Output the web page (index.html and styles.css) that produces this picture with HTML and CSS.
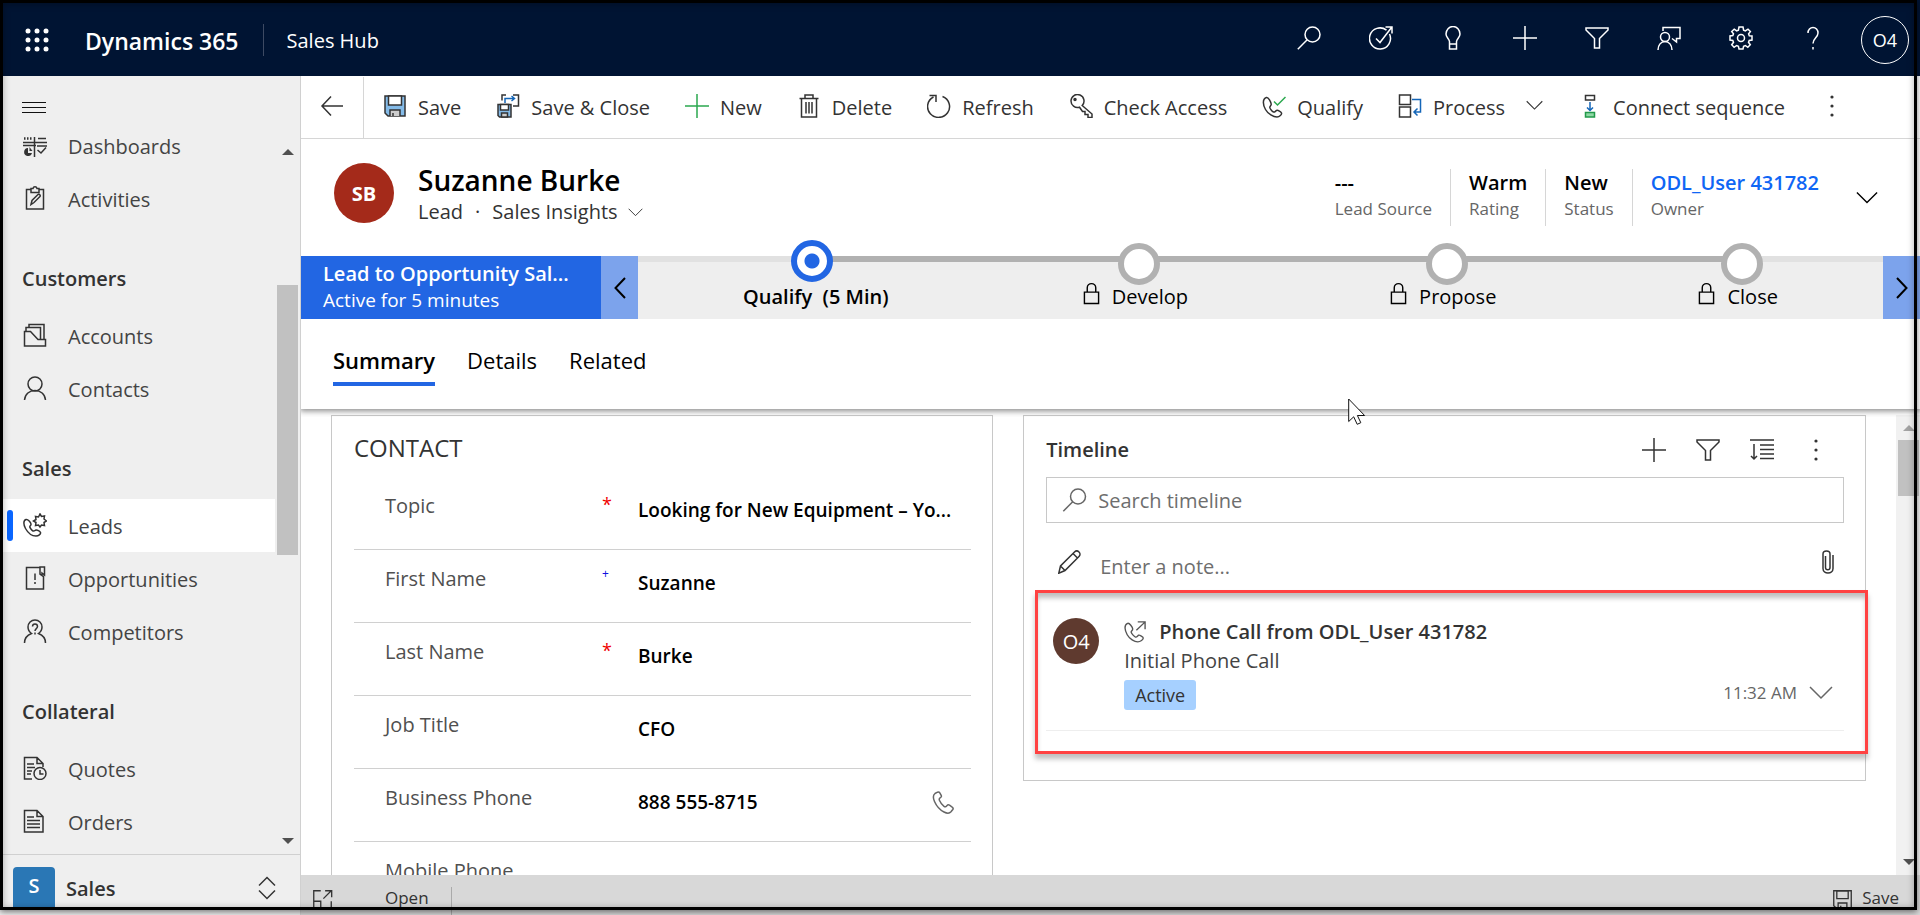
FILE: index.html
```html
<!DOCTYPE html>
<html lang="en">
<head>
<meta charset="utf-8">
<title>Lead: Suzanne Burke - Dynamics 365</title>
<link rel="stylesheet" href="styles.css">
</head>
<body>
<svg class="sprite" aria-hidden="true">
  <symbol id="search" viewBox="0 0 24 24"><circle cx="15.500" cy="8.500" r="7.500"/><path d="M10.200 13.800 .8 23.200"/></symbol>
  <symbol id="plus" viewBox="0 0 24 24"><path d="M12 0v24M0 12h24"/></symbol>
  <symbol id="filter" viewBox="0 0 24 24"><path d="M1 2h22v2l-8.500 8.500V22h-5v-9.500L1 4z"/></symbol>
  <symbol id="more" viewBox="0 0 24 24"><g fill="currentColor" stroke="none"><circle cx="12" cy="3" r="1.600"/><circle cx="12" cy="12" r="1.600"/><circle cx="12" cy="21" r="1.600"/></g></symbol>
  <symbol id="down" viewBox="0 0 24 24"><path d="m1 6 11 11L23 6"/></symbol>
  <symbol id="phone" viewBox="0 0 24 24"><path d="M5.500 2.200 3 3.500C1 5 1 8 2.500 11.500c2 4.500 5.500 8.500 9.500 10.500 3 1.500 5.500 1.500 7-.2l1.800-2.300c.6-.9.3-1.800-.6-2.400l-2.700-1.900c-1-.6-1.900-.4-2.600.5-.8 1.200-1.800 1.400-2.900.6-2-1.500-3.600-3.600-4.600-6-.5-1.300-.1-2 1-2.600.9-.5 1.300-1.300.8-2.300L7.800 2.900c-.5-.9-1.400-1.100-2.300-.7z"/></symbol>
  <symbol id="disk" viewBox="0 0 24 24"><path class="disk-body" d="M2 2h20v20H5l-3-3z"/><path class="disk-paper" d="M5.500 2h13v9h-13z"/><path class="disk-slot" d="M7 22v-6h10v6M10 22v-3"/></symbol>
  <symbol id="lock" viewBox="0 0 18 24"><path d="M1.500 10.500h15v12h-15zM4.500 10.500V6a4.500 4.500 0 0 1 9 0v4.500"/></symbol>
</svg>

<div class="app">
  <header class="topbar">
    <button class="waffle" aria-label="App launcher"><svg viewBox="0 0 24 24"><g fill="currentColor" stroke="none"><circle cx="3" cy="3" r="2.500"/><circle cx="12" cy="3" r="2.500"/><circle cx="21" cy="3" r="2.500"/><circle cx="3" cy="12" r="2.500"/><circle cx="12" cy="12" r="2.500"/><circle cx="21" cy="12" r="2.500"/><circle cx="3" cy="21" r="2.500"/><circle cx="12" cy="21" r="2.500"/><circle cx="21" cy="21" r="2.500"/></g></svg></button>
    <a class="brand" href="#">Dynamics 365</a>
    <a class="app-name" href="#">Sales Hub</a>
    <div class="top-actions">
      <button aria-label="Search"><svg><use href="#search"/></svg></button>
      <button aria-label="Assistant"><svg viewBox="0 0 24 24"><path d="M17.500 4.200A10.500 10.500 0 1 0 20.500 8M7 12.500l4 4L22.500 1.500M16.500 1h6.500v6.500"/></svg></button>
      <button aria-label="Insights"><svg viewBox="0 0 24 24"><path d="M8.500 18v-2.500C8 12.500 5 11.500 5 8a7 7.500 0 0 1 14 0c0 3.500-3 4.500-3.500 7.500V18M8.500 18h7v5h-7z"/></svg></button>
      <button aria-label="Quick create"><svg><use href="#plus"/></svg></button>
      <button aria-label="Filter"><svg><use href="#filter"/></svg></button>
      <button aria-label="Contact support"><svg viewBox="0 0 24 24"><circle cx="8" cy="11" r="4.500"/><path d="M1 24c0-5 3-8.500 7-8.500s7 3.500 7 8.500M6 5V1.500h17v11h-3.500V16L15 12.500"/></svg></button>
      <button aria-label="Settings"><svg viewBox="0 0 24 24"><circle cx="12" cy="12" r="3.500"/><path d="M10 1h4l.6 3.200 1.700.7L19 3.100 21.400 5.500l-1.800 2.300.7 1.900L23 10v4l-2.800.5-.7 1.800 1.800 2.400L18.800 21.300 16.400 19.500l-1.800.7L14 23h-4l-.6-2.800-1.800-.7-2.500 1.800L2.700 18.800l1.800-2.500-.7-1.800L1 14v-4l2.800-.4.700-1.800-1.800-2.300L5.200 3.100l2.500 1.800 1.700-.7z"/></svg></button>
      <button aria-label="Help"><svg viewBox="0 0 24 24"><path d="M7 7a5 5.500 0 0 1 10 0c0 4.500-5 5-5 10.500M12 21v2.500"/></svg></button>
      <button class="me">O4</button>
    </div>
  </header>

  <div class="body">
    <aside class="sidebar">
      <button class="burger" aria-label="Collapse menu"><svg viewBox="0 0 24 12"><path d="M0 .5h24M0 5.500h24M0 10.500h24"/></svg></button>
      <div class="nav-area">
        <nav class="nav">
          <a href="#"><svg viewBox="0 0 24 24"><path d="M0 9.500h24M0 12.500h13M11.500 4v20M15 5.500h8M14 13h10M14.500 17l3.500 3 5-5.500"/><path stroke-width="2.500" stroke-dasharray="1.500 1.500" d="M1 5.500h9"/><path fill="currentColor" stroke="none" d="M5 15a4 4 0 1 0 4 5H5zM6.500 14v4h3z"/></svg>Dashboards</a>
          <a href="#"><svg viewBox="0 0 24 24"><path d="M8 3.500H3.500V23h17V3.500H16M8 6.500v-4h2C10.500.2 13.500.2 14 2.500h2v4zM8 18.500l1-4 6-6c1-1 3 1 2 2l-6 6z"/></svg>Activities</a>
          <h2>Customers</h2>
          <a href="#"><svg viewBox="0 0 24 24"><path d="M1.500 8.500h6l7.500 8h7.500v6.500h-21zM3 8.500V4.500h14.500v12M6 4.500v-3h15v15"/></svg>Accounts</a>
          <a href="#"><svg viewBox="0 0 24 24"><circle cx="12" cy="8" r="7"/><path d="M1.500 24c.5-6 5-9.500 10.500-9.500S22 18 22.500 24"/></svg>Contacts</a>
          <h2>Sales</h2>
          <a class="current" href="#"><svg viewBox="0 0 24 24"><path d="M3 6.500C0 7.500.5 12 2.500 15.500c2.500 4.500 6.500 7.500 10.500 7.500 2.500 0 5-2 4.500-3.500-.5-1-3.500-3-4.500-2.500S11 18.500 10 18s-3-3-3.200-4 1.400-1.500 1.200-3S5 6 3 6.500zM17 1l1.500 2.500 3-.5-.5 3L23.500 8 21 9.500l.5 3-3-.5L17 14l-1.500-2-3 .5.500-3L10.500 8 13 6.500l-.5-3 3 .5z"/></svg>Leads</a>
          <a href="#"><svg viewBox="0 0 24 24"><path d="M17 1.500H3.500V23h17V9.500M17 1h4.500v8L19 7v2.500L17 8zM12 7.500V14M12 16v2"/></svg>Opportunities</a>
          <a href="#"><svg viewBox="0 0 24 24"><path d="M1.500 24c0-5 3-8 7-9.500-2-1.500-3.500-4-3.500-6.500a7 7 0 0 1 14 0c0 2.500-1.500 5-3.500 6.500 4 1.500 7 4.500 7 9.500M9.500 7.500c0-3.500 5-3.500 5 0 0 2.200-2.500 2-2.500 4.500M12 13.500v2"/></svg>Competitors</a>
          <h2>Collateral</h2>
          <a href="#"><svg viewBox="0 0 24 24"><path d="M9 23H1.500V1.500H14l6 6V11M14 1.500v6h6M4 8h7M4 11.500h8M4 15h5M4 18h4"/><circle cx="17" cy="17.500" r="6"/><path d="M17 14v4h3.500"/></svg>Quotes</a>
          <a href="#"><svg viewBox="0 0 24 24"><path d="M1.500 1.500H14l6 6V23h-18.500zM14 1.500v6h6M4 8h7M4 11.500h13M4 15h13M4 18.500h13"/></svg>Orders</a>
        </nav>
        <div class="side-scroll"><i class="tri up"></i><i class="side-thumb"></i><i class="tri"></i></div>
      </div>
      <button class="area"><span class="area-tile">S</span>Sales<svg viewBox="0 0 18 24"><path d="m1 9.500 8-8 8 8M1 14.500l8 8 8-8"/></svg></button>
    </aside>

    <main class="main">
      <div class="commands">
        <button class="back" aria-label="Back"><svg viewBox="0 0 24 24"><path d="M23 12H2M11 2.500 2 12l9 9.500"/></svg></button>
        <button><svg class="disk"><use href="#disk"/></svg>Save</button>
        <button><svg class="disk" viewBox="0 0 24 24"><path d="M6 6.500V1h4M17 1h5.500v11H17"/><path class="blue" d="M9 9V4.500h9M15.500 2l3 2.500-3 2.500"/><path class="disk-body" d="M2 10.500h13V23H3.500L2 21.500z"/><path class="disk-paper" d="M4.500 10.500h8V16h-8z"/><path class="disk-slot" d="M5.500 23v-4h6v4z"/></svg>Save &amp; Close</button>
        <button><svg class="green"><use href="#plus"/></svg>New</button>
        <button><svg viewBox="0 0 24 24"><path d="M2.500 4.500h19M8 4.500V1h8v3.500M4.500 4.500V23h15V4.500M9 8v11.500M12 8v11.500M15 8v11.500"/></svg>Delete</button>
        <button><svg viewBox="0 0 24 24"><path d="M15.500 2.500A11 10.800 0 1 1 6.500 3M2.500 1.500h6.500V8"/></svg>Refresh</button>
        <button><svg viewBox="0 0 24 24"><path d="M13.200 11.500 23 20v3.500h-4v-3h-3v-3h-2.500L10.500 13.200A6.500 6.500 0 1 1 13.200 11.500z"/><circle cx="6" cy="5.500" r="1" fill="currentColor"/></svg>Check Access</button>
        <button><svg viewBox="0 0 24 24"><path d="M4.500 3.500C0 5 1 11 3.500 15.500s8 7.500 11.500 7.500c2.500 0 5-2.500 4.500-4-.5-1-3.500-3.300-5-2.500s-1.500 2-3 1.500-3.500-3.200-3.700-4.500 1.700-1.700 1.400-3.500S6.500 3 4.500 3.500z"/><path class="green" d="m12 7.500 3.500 3.500L23.500 3"/></svg>Qualify</button>
        <button><svg viewBox="0 0 24 24"><path d="M1.500 1h11v9.500h-11zM1.500 13h11v10h-11z"/><path class="blue" d="M14 5.500h8.500V18H17M19.500 14.500l-3.500 3.500 3.500 3.500"/></svg>Process<svg class="small-chev"><use href="#down"/></svg></button>
        <button><svg viewBox="0 0 24 24"><path d="M7.500 1.500h9v4.500h-9z"/><path class="blue" d="M12 8v8M9 13.500l3 3 3-3"/><path class="green-fill" d="M7.500 18.500h9V23h-9z"/></svg>Connect sequence</button>
        <button aria-label="More commands"><svg><use href="#more"/></svg></button>
      </div>

      <section class="record">
        <span class="avatar">SB</span>
        <div class="identity">
          <h1>Suzanne Burke</h1>
          <div class="kind"><span>Lead</span><span>·</span><button>Sales Insights<svg><use href="#down"/></svg></button></div>
        </div>
        <dl class="facts">
          <div><dd>---</dd><dt>Lead Source</dt></div>
          <div><dd>Warm</dd><dt>Rating</dt></div>
          <div><dd>New</dd><dt>Status</dt></div>
          <div><dd><a href="#">ODL_User 431782</a></dd><dt>Owner</dt></div>
        </dl>
        <button class="expand" aria-label="Expand header"><svg><use href="#down"/></svg></button>
      </section>

      <section class="process">
        <button class="process-name"><strong>Lead to Opportunity Sal...</strong><span>Active for 5 minutes</span></button>
        <button class="step prev" aria-label="Previous stage"><svg viewBox="0 0 12 24"><path d="M11 2 1.500 12l9.500 10"/></svg></button>
        <div class="stages">
          <i class="track"></i>
          <button class="stage active"><i class="dot"></i><span>Qualify&nbsp; (5 Min)</span></button>
          <button class="stage"><i class="dot"></i><span><svg><use href="#lock"/></svg>Develop</span></button>
          <button class="stage"><i class="dot"></i><span><svg><use href="#lock"/></svg>Propose</span></button>
          <button class="stage"><i class="dot"></i><span><svg><use href="#lock"/></svg>Close</span></button>
        </div>
        <button class="step next" aria-label="Next stage"><svg viewBox="0 0 12 24"><path d="m1 2 9.500 10L1 22"/></svg></button>
      </section>

      <nav class="tabs">
        <button class="on">Summary</button><button>Details</button><button>Related</button>
      </nav>

      <div class="content">
        <div class="form">
          <section class="card contact">
            <h2>CONTACT</h2>
            <div class="field"><label for="topic">Topic</label><b class="req">*</b><input id="topic" value="Looking for New Equipment – Yo..."></div>
            <div class="field"><label for="first">First Name</label><b class="rec">+</b><input id="first" value="Suzanne"></div>
            <div class="field"><label for="last">Last Name</label><b class="req">*</b><input id="last" value="Burke"></div>
            <div class="field"><label for="job">Job Title</label><b></b><input id="job" value="CFO"></div>
            <div class="field"><label for="bphone">Business Phone</label><b></b><input id="bphone" value="888 555-8715"><button aria-label="Call"><svg><use href="#phone"/></svg></button></div>
            <div class="field"><label for="mphone">Mobile Phone</label><b></b><input id="mphone" value=""></div>
          </section>

          <section class="card timeline">
            <div class="tl-head">
              <h2>Timeline</h2>
              <button aria-label="Create a record"><svg><use href="#plus"/></svg></button>
              <button aria-label="Filter timeline"><svg><use href="#filter"/></svg></button>
              <button aria-label="Sort"><svg viewBox="0 0 24 24"><path d="M0 2h24M10 7h14M10 11.500h14M10 16h14M10 20.500h14M4 6v15M1 18l3 3 3-3"/></svg></button>
              <button aria-label="More"><svg><use href="#more"/></svg></button>
            </div>
            <label class="search"><svg><use href="#search"/></svg><input placeholder="Search timeline" aria-label="Search timeline"></label>
            <label class="note"><svg viewBox="0 0 24 24"><path d="M.8 23.200 2.500 16 16.500 2c3-3 7.500 1.500 4.500 4.500l-14 14zM15 3.500l5 5M2.500 16l5 5"/></svg><input placeholder="Enter a note..." aria-label="Enter a note"><svg class="clip" viewBox="0 0 12 24"><path d="M3.500 6v11.500c0 3 4.500 3 4.500 0V4c0-4-7-4-7 0v14.500c0 6 10 6 10 0V5"/></svg></label>
            <article class="entry">
              <span class="entry-avatar">O4</span>
              <div class="entry-text">
                <h3><svg viewBox="0 0 24 24"><path d="M4 2.500C-.5 4 1 10.500 3.500 15s8 7.800 11.500 7.800c3 0 6-2.500 6-4.300 0-1-4-3.500-5-3s-2 2.500-3.500 2S8 13.500 7.800 12.200s2-2 1.700-3.700S6 1.800 4 2.500zM13.500 10l9-8.500M15 1h8v8"/></svg>Phone Call from ODL_User 431782</h3>
                <p>Initial Phone Call</p>
                <span class="badge">Active</span>
              </div>
              <div class="entry-time"><time>11:32 AM</time><button aria-label="Expand entry"><svg><use href="#down"/></svg></button></div>
            </article>
          </section>
        </div>
        <div class="main-scroll"><i class="tri up dim"></i><i class="main-thumb"></i><i class="tri"></i></div>
      </div>

      <footer class="status">
        <button aria-label="Pop out"><svg viewBox="0 0 24 24"><path d="M10 2H2v20h20v-8M2 14h8v8M13 11l9-9M15 2h7.500v7.500"/></svg></button>
        <span class="state">Open</span>
        <button class="status-save"><svg><use href="#disk"/></svg>Save</button>
      </footer>
    </main>
  </div>
</div>
<div class="frame"></div>
<svg class="cursor" viewBox="0 0 18 27"><path d="M.7 1v22.500l5-4.700 3.500 7.500 3.600-1.600-3.400-7.200h7.200z"/></svg>
</body>
</html>
```

FILE: styles.css
```css
* { box-sizing: border-box; }
body { margin: 0; font: 20px/28px "Segoe UI", "Open Sans", "Noto Sans", sans-serif; color: #333; background: #fff; }
h1, h2, h3, p, dl, dd { margin: 0; }
h1, h2, h3 { font-weight: 600; font-size: 20px; }
a { color: inherit; text-decoration: none; }
button, input { font: inherit; color: inherit; background: none; border: 0; padding: 0; margin: 0; }
input { min-width: 0; outline: 0; text-overflow: ellipsis; }
svg { width: 24px; height: 24px; fill: none; stroke: currentColor; stroke-width: 1.5; flex: none; display: block; }
.sprite { position: absolute; width: 0; height: 0; }
.app { height: 100vh; display: flex; flex-direction: column; overflow: hidden; }

.topbar { flex: none; height: 76px; padding: 4px 11px 0 25px; display: flex; align-items: center; background: #001433; color: #fff; }
.brand { margin-left: 36px; padding: 2px 24px 0 0; font-size: 23px; line-height: 30px; font-weight: 600; border-right: 1px solid #3d4a63; }
.app-name { margin-left: 23px; padding-top: 2px; }
.top-actions { margin-left: auto; display: flex; align-items: center; gap: 48px; }
.top-actions svg { margin-bottom: 4px; }
.top-actions .me { width: 48px; height: 48px; margin-left: -12px; border: 1px solid #fff; border-radius: 50%; font-size: 18px; }

.body { flex: 1; min-height: 0; display: flex; }
.sidebar { flex: none; width: 301px; display: flex; flex-direction: column; background: #efefef; border-right: 1px solid #d0d0d0; }
.burger { height: 43px; padding: 20px 22px 0; color: #111; }
.burger svg { height: 12px; stroke-width: 1; }
.nav-area { flex: 1; min-height: 0; display: flex; }
.nav { flex: 1; overflow: hidden; }
.nav a { height: 53px; padding: 2px 0 0 23px; display: flex; align-items: center; gap: 21px; color: #444; }
.nav a svg { color: #333; margin-top: -4px; }
.nav a.current { background: #fff; position: relative; }
.nav a.current::before { content: ""; position: absolute; left: 7px; top: 11px; width: 6px; height: 31px; border-radius: 3px; background: #0a66ff; }
.nav h2 { height: 84px; padding: 40px 22px 0; line-height: 28px; }
.side-scroll { flex: none; width: 25px; padding: 30px 2px 10px; display: flex; flex-direction: column; align-items: center; }
.side-thumb { width: 21px; height: 270px; margin-top: 130px; background: #c1c1c1; }
.tri { border: 6px solid transparent; border-bottom: 0; border-top-color: #505050; }
.tri.up { border-bottom: 6px solid #505050; border-top: 0; }
.tri.dim { border-bottom-color: #a3a3a3; }
.tri:last-child { margin-top: auto; }
.area { flex: none; height: 61px; padding: 12px 24px 0 13px; display: flex; align-items: flex-start; border-top: 1px solid #d0d0d0; text-align: left; font-weight: 600; line-height: 44px; }
.area-tile { width: 42px; height: 42px; line-height: 38px; margin-right: 11px; text-align: center; color: #fff; background: #2a77b5; border-radius: 4px 4px 0 0; }
.area svg { width: 18px; margin: 9px 0 0 auto; }

.main { flex: 1; min-width: 0; display: flex; flex-direction: column; }
.commands { flex: none; height: 63px; padding-top: 1px; display: flex; align-items: center; gap: 35px; border-bottom: 1px solid #d6d6d6; white-space: nowrap; }
.commands button { display: flex; align-items: center; gap: 11px; }
.commands svg { margin-bottom: 4px; }
.commands .back { align-self: stretch; width: 63px; margin-right: -16px; justify-content: center; border-right: 1px solid #d6d6d6; }
.commands .small-chev { width: 17px; height: 17px; margin-left: 10px; }
.disk { --disk: #84bbe8; --paper: #fff; --slot: #ccc; }
.disk-body { fill: var(--disk, none); }
.disk-paper { fill: var(--paper, none); }
.disk-slot { fill: var(--slot, none); }
.blue { stroke: #1466b8; }
.green { stroke: #2ba84f; }
.green-fill { stroke: #22994a; fill: #8ed8a4; }

.record { flex: none; height: 117px; padding: 24px 42px 0 33px; display: flex; align-items: flex-start; }
.avatar { width: 60px; height: 60px; border-radius: 50%; background: #a42a1a; color: #fff; font-weight: 700; line-height: 62px; text-align: center; }
.identity { margin-left: 24px; }
.identity h1 { font-size: 28px; line-height: 34px; color: #000; }
.kind { display: flex; gap: 12px; line-height: 30px; }
.kind button { display: flex; align-items: center; gap: 10px; }
.kind svg { width: 15px; height: 15px; }
.facts { margin: 6px 0 0 auto; display: flex; }
.facts div { height: 57px; padding: 0 18px; border-left: 1px solid #d6d6d6; }
.facts div:first-child { border: 0; }
.facts dd { font-weight: 600; color: #000; line-height: 28px; }
.facts dd a { color: #0f66f5; }
.facts dt { font-size: 17px; line-height: 24px; color: #666; }
.expand { margin: 24px 0 0 19px; }
.expand svg { width: 22px; height: 22px; color: #000; }

.process { flex: none; height: 63px; display: flex; }
.process-name { flex: none; width: 300px; padding: 0 22px 2px; background: #2266e3; color: #fff; text-align: left; white-space: nowrap; line-height: 27px; }
.process-name strong { display: block; font-weight: 600; }
.process-name span { display: block; font-size: 19px; }
.step { flex: none; width: 37px; background: #7ca3ec; color: #000; }
.step svg { width: 12px; margin: 0 auto; stroke-width: 2; }
.stages { flex: 1; position: relative; display: flex; justify-content: space-around; background: #eee; border-top: 6px solid #e1e1e1; color: #000; }
.track { position: absolute; left: 14%; right: 11%; top: -6px; height: 6px; background: #b1b1b1; }
.stage { position: relative; height: 63px; margin-top: -19px; display: flex; flex-direction: column; align-items: center; }
.dot { flex: none; width: 42px; height: 42px; border-radius: 50%; border: 6px solid #b1b1b1; background: #fff; }
.stage span { margin-top: -3px; padding-right: 8px; display: flex; align-items: center; gap: 12px; line-height: 27px; }
.stage span svg { width: 17px; height: 23px; margin-bottom: 6px; }
.stage.active { margin-top: -22px; font-weight: 600; }
.stage.active .dot { border-color: #2266e3; background: radial-gradient(circle, #2266e3 7px, #fff 8px); }
.stage.active span { margin-top: 1px; padding: 0 0 0 8px; }

.tabs { flex: none; height: 90px; padding: 22px 32px 0; display: flex; align-items: flex-start; gap: 32px; font-size: 22px; color: #000; position: relative; z-index: 1; background: #fff; box-shadow: 0 1px 6px 1px #888; clip-path: inset(0 0 -8px 0); }
.tabs button { height: 45px; padding-bottom: 8px; }
.tabs .on { font-weight: 600; background: linear-gradient(#2266e3, #2266e3) bottom / 100% 4px no-repeat; }

.content { flex: 1; min-height: 0; padding-top: 6px; display: flex; overflow: hidden; }
.form { flex: 1; padding: 0 30px; display: grid; grid-template-columns: 11fr 14fr; gap: 30px; align-items: start; }
.card { border: 1px solid #c8c8c8; background: #fff; }
.contact { padding: 15px 21px 40px 22px; }
.contact h2 { font-weight: 400; font-size: 24px; line-height: 34px; }
.field { height: 73px; padding: 15px 15px 0 31px; display: grid; grid-template-columns: 217px 36px 1fr auto; align-items: start; border-bottom: 1px solid #d0d0d0; }
.contact h2 + .field { height: 85px; padding: 27px 12px 0 31px; }
.field label { color: #505050; line-height: 28px; }
.field b { font-weight: 400; font-size: 18px; line-height: 24px; }
.field .req { color: #f00000; }
.field .rec { color: #1010e0; font-size: 12px; line-height: 18px; }
.field input { width: 100%; height: 28px; margin-top: 4px; font-size: 19px; font-weight: 600; color: #000; }
.field button { margin-top: 6px; color: #666; }

.timeline { padding: 22px 21px 0 22px; height: 366px; }
.tl-head { display: flex; align-items: center; gap: 30px; height: 24px; }
.tl-head h2 { flex: 1; }
.tl-head button:last-child { margin-right: 16px; }
.search { height: 46px; margin-top: 15px; padding-left: 15px; display: flex; align-items: center; gap: 11px; border: 1px solid #c8c8c8; color: #666; }
.search input, .note input { flex: 1; padding-top: 2px; }
.search svg { width: 25px; }
input::placeholder { color: #6e6e6e; opacity: 1; }
.note { height: 67px; padding: 19px 10px 0 12px; display: flex; align-items: center; gap: 18px; }
.note svg { margin-bottom: 8px; }
.note .clip { width: 12px; }
.entry { height: 164px; margin: 0 -24px 0 -11px; padding: 24px 32px 0 15px; position: relative; display: flex; align-items: flex-start; border: 3px solid #ff4242; box-shadow: 0 5px 5px rgba(0,0,0,.25), inset 0 6px 5px -1px rgba(0,0,0,.25); }
.entry::after { content: ""; position: absolute; left: 8px; right: 21px; bottom: 20px; border-bottom: 1px solid #eee; }
.entry-avatar { width: 46px; height: 46px; margin-top: 1px; border-radius: 50%; background: #5f3a2f; color: #fff; line-height: 48px; text-align: center; }
.entry-text { margin-left: 25px; }
.entry-text h3 { display: flex; align-items: center; gap: 13px; line-height: 30px; }
.entry-text h3 svg { width: 22px; height: 22px; color: #555; }
.entry-text p { line-height: 28px; color: #444; }
.badge { display: block; width: 72px; margin-top: 5px; font-size: 18px; line-height: 30px; text-align: center; background: #a6d0ff; border-radius: 3px; }
.entry-time { margin: 62px 0 0 auto; display: flex; align-items: center; gap: 12px; font-size: 17px; color: #666; }
.main-scroll { flex: none; width: 24px; padding: 10px 1px 10px 2px; display: flex; flex-direction: column; align-items: center; background: #f1f1f1; }
.main-thumb { width: 21px; height: 56px; margin-top: 9px; background: #c1c1c1; }

.status { flex: none; height: 40px; padding: 12px 21px 0 11px; display: flex; align-items: flex-start; background: #d8d8d8; font-size: 17px; line-height: 22px; }
.status svg { width: 21px; height: 21px; margin-top: 2px; }
.state { margin-left: 52px; padding: 0 22px 10px 0; border-right: 1px solid #aaa; }
.status-save { margin-left: auto; display: flex; gap: 9px; }

.frame { position: fixed; inset: 0 3px 5px 0; border: 3px solid #000; box-shadow: 0 2px 6px rgba(0,0,0,.5), inset 0 1px 7px rgba(0,0,0,.3); pointer-events: none; z-index: 5; }
.cursor { position: absolute; left: 1348px; top: 398px; width: 18px; height: 27px; fill: #fff; stroke: #111; stroke-width: 1; z-index: 4; }
```
